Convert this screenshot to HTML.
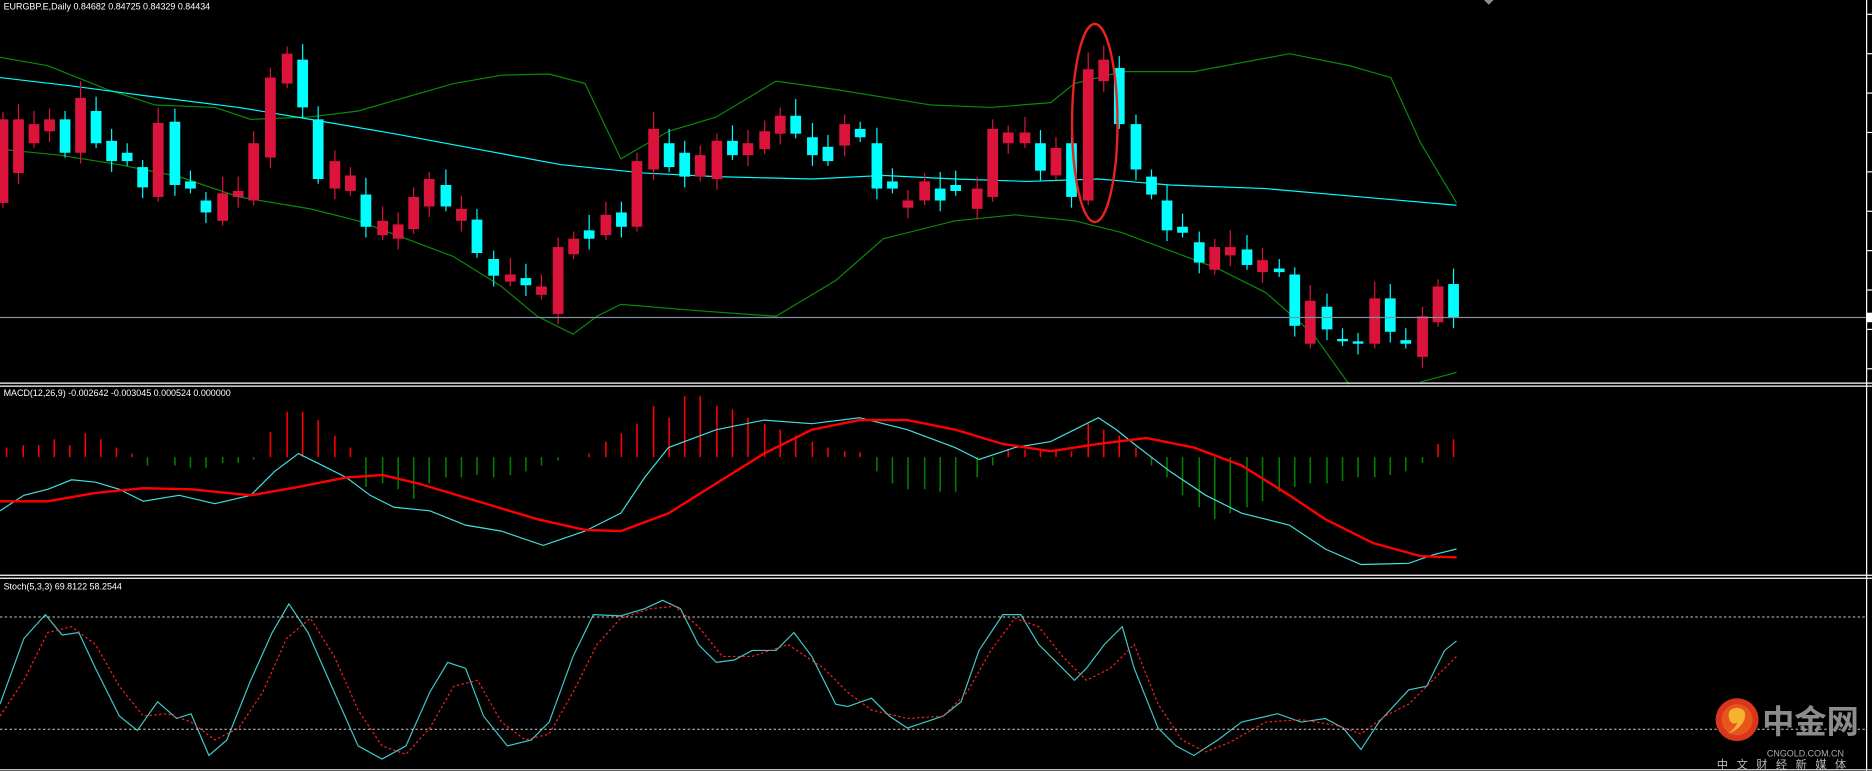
<!DOCTYPE html>
<html><head><meta charset="utf-8"><style>
html,body{margin:0;padding:0;background:#000;width:1872px;height:771px;overflow:hidden}
svg{display:block}
</style></head><body>
<svg id="s" width="1872" height="771" viewBox="0 0 1568 646" preserveAspectRatio="none" xmlns="http://www.w3.org/2000/svg">
<rect width="1568" height="646" fill="#000"/>
<g id="g"></g>
<text x="3" y="8" fill="#fff" font-family="Liberation Sans, sans-serif" font-size="7.5">EURGBP.E,Daily  0.84682 0.84725 0.84329 0.84434</text>
<text x="3" y="332" fill="#fff" font-family="Liberation Sans, sans-serif" font-size="7.5">MACD(12,26,9) -0.002642 -0.003045 0.000524 0.000000</text>
<text x="3" y="494" fill="#fff" font-family="Liberation Sans, sans-serif" font-size="7.5">Stoch(5,3,3) 69.8122 58.2544</text>
<line x1="0" y1="321" x2="1568" y2="321" stroke="#fff" stroke-width="1"/>
<line x1="0" y1="323.5" x2="1568" y2="323.5" stroke="#fff" stroke-width="1"/>
<line x1="0" y1="482" x2="1568" y2="482" stroke="#fff" stroke-width="1"/>
<line x1="0" y1="484.5" x2="1568" y2="484.5" stroke="#fff" stroke-width="1"/>
<line x1="0" y1="645" x2="1568" y2="645" stroke="#fff" stroke-width="1"/>
<line x1="1563.5" y1="0" x2="1563.5" y2="646" stroke="#fff" stroke-width="1"/>
<line x1="0" y1="266" x2="1563" y2="266" stroke="#8090a0" stroke-width="1"/>
<rect x="1563" y="262" width="5" height="8" fill="#fff"/>
<polygon points="1243,0 1251,0 1247,4" fill="#8090a0"/>
<line x1="0" y1="517" x2="1563" y2="517" stroke="#ccc" stroke-width="0.8" stroke-dasharray="2,2"/>
<line x1="0" y1="611" x2="1563" y2="611" stroke="#ccc" stroke-width="0.8" stroke-dasharray="2,2"/>
<ellipse cx="917" cy="103" rx="19" ry="83" fill="none" stroke="#e8231f" stroke-width="2"/>
<circle cx="1455" cy="603" r="18" fill="#d9361b"/>
<circle cx="1455" cy="603" r="13" fill="#e8561e"/>
<path d="M1449,604 q-4,-10 6,-11 q9,1 6,10 q-3,8 -14,12 q8,-6 8,-10 q-3,3 -6,-1z" fill="#f5b430"/>
<text x="1476" y="614" fill="#8c8c8c" font-family="Noto Sans CJK SC, sans-serif" font-weight="bold" font-size="27">中金网</text>
<text x="1480" y="634" fill="#aaa" font-family="Liberation Sans, sans-serif" font-size="7.5">CNGOLD.COM.CN</text>
<text x="1438" y="644" fill="#bbb" font-family="Noto Sans CJK SC, sans-serif" font-size="9.5" letter-spacing="7">中文财经新媒体</text>
</svg>
<script>
var NS="http://www.w3.org/2000/svg",g=document.getElementById("g");
function el(t,a){var e=document.createElementNS(NS,t);for(var k in a)e.setAttribute(k,a[k]);g.appendChild(e);return e;}
function pl(p,c,w,d){var s=[];for(var i=0;i<p.length;i+=2)s.push(p[i]+","+p[i+1]);var a={points:s.join(" "),fill:"none",stroke:c,"stroke-width":w};if(d)a["stroke-dasharray"]=d;el("polyline",a);}
pl([0,48,40,55,90,75,130,88,180,90,210,100,260,98,300,93,380,70,420,63,460,62,490,70,520,133,560,110,600,98,650,68,700,75,780,88,830,90,880,86,900,70,940,60,1000,60,1080,45,1130,55,1165,65,1190,120,1220,170],"#0a8a0a",1);
pl([0,65,60,72,120,80,200,90,260,100,330,112,400,125,470,138,540,145,600,148,680,150,740,147,800,150,860,152,920,150,980,155,1060,158,1140,165,1220,172],"#00ffff",1);
pl([0,125,50,130,100,138,150,148,200,165,260,175,300,185,340,200,380,215,420,240,450,265,480,280,500,265,520,255,580,260,650,265,700,235,740,200,800,185,850,180,900,185,940,195,980,210,1020,225,1060,245,1100,280,1130,322],"#0a8a0a",1);
pl([1190,320,1205,316,1220,312],"#0a8a0a",1);
var C=[[2,'r',100,170],[15,'r',100,145],[28,'r',104,120],[41,'r',100,110],[54,'c',100,128],[67,'r',82,128],[80,'c',93,120],[93,'c',118,135],[106,'c',128,135],[119,'c',140,157],[132,'r',103,165],[146,'c',102,155],[159,'c',152,158],[172,'c',168,178],[186,'r',162,185],[199,'r',160,165],[212,'r',120,168],[226,'r',65,132],[240,'r',45,70],[253,'c',50,90],[266,'c',100,150],[280,'r',135,158],[293,'r',147,160],[306,'c',163,190],[320,'r',185,197],[333,'r',188,200],[346,'r',165,192],[359,'r',150,173],[373,'c',155,173],[386,'r',175,185],[399,'c',184,212],[413,'c',217,231],[427,'r',230,236],[440,'c',233,239],[453,'r',240,247],[467,'r',207,263],[480,'r',200,213],[493,'c',193,200],[507,'r',180,197],[520,'c',178,190],[533,'r',135,190],[547,'r',108,142],[560,'c',120,140],[573,'c',128,148],[586,'r',130,148],[600,'r',118,150],[613,'c',118,130],[626,'r',120,130],[640,'r',110,125],[653,'r',97,112],[666,'c',97,112],[680,'c',115,130],[693,'c',123,135],[707,'r',104,122],[720,'c',108,115],[734,'c',120,158],[747,'c',152,158],[760,'r',168,174],[774,'r',152,168],[787,'c',158,168],[800,'c',155,160],[818,'r',158,175],[831,'r',108,165],[844,'r',111,120],[858,'r',111,120],[871,'c',120,143],[884,'r',124,147],[897,'c',120,165],[911,'r',58,168],[924,'r',50,68],[937,'c',57,104],[951,'c',104,142],[964,'c',148,163],[977,'c',168,193],[990,'c',190,195],[1004,'c',203,220],[1017,'r',207,226],[1030,'r',207,214],[1044,'c',209,222],[1057,'r',218,228],[1071,'c',225,228],[1084,'c',230,273],[1097,'r',252,288],[1111,'c',257,276],[1124,'c',284,286],[1137,'c',286,288],[1151,'r',250,288],[1164,'c',250,278],[1177,'c',285,288],[1191,'r',265,299],[1204,'r',240,270],[1217,'c',238,266]];
C.forEach(function(k,i){var col=k[1]=='r'?'#dc143c':'#00ffff';var wl=6+((i*7)%9),wh=4+((i*5)%10);
el("line",{x1:k[0]+.5,x2:k[0]+.5,y1:k[2]-wl,y2:k[3]+wh,stroke:col,"stroke-width":1});
el("rect",{x:k[0]-4,y:k[2],width:9,height:Math.max(2,k[3]-k[2]),fill:col});});
var base=383;
var H=[[5,375],[19,373],[32,373],[45,368],[58,373],[71,363],[84,368],[97,375],[110,380],[123,390],[146,390],[159,392],[172,392],[186,388],[199,388],[212,385],[226,362],[240,345],[253,345],[266,352],[280,365],[293,375],[306,408],[320,405],[333,410],[346,418],[359,405],[373,400],[386,400],[399,398],[413,400],[427,398],[440,395],[453,390],[467,386],[493,380],[507,370],[520,363],[533,355],[547,340],[560,350],[573,332],[586,332],[600,340],[613,343],[626,350],[640,355],[653,360],[666,365],[680,370],[693,375],[707,378],[720,379],[734,395],[747,405],[760,410],[774,410],[787,412],[800,412],[818,400],[831,390],[844,376],[858,377],[871,377],[884,377],[897,378],[911,355],[924,360],[937,365],[951,375],[964,390],[977,400],[990,415],[1004,425],[1017,435],[1030,430],[1044,425],[1057,420],[1071,412],[1084,408],[1097,405],[1111,405],[1124,403],[1137,400],[1151,400],[1164,398],[1177,395],[1191,388],[1204,372],[1217,368]];
H.forEach(function(h){var c=h[1]<base?'#ff0000':'#008000';el("line",{x1:h[0]+.5,x2:h[0]+.5,y1:base,y2:h[1],stroke:c,"stroke-width":1.3});});
pl([0,428,20,415,40,410,60,402,80,404,100,410,120,420,150,415,180,422,210,415,230,395,250,380,270,390,290,400,310,415,330,425,360,428,390,440,420,445,455,457,490,445,520,430,540,400,560,375,600,360,640,352,680,355,720,350,760,360,800,375,820,385,850,375,880,370,900,360,920,350,935,360,950,372,980,395,1010,415,1040,430,1080,440,1110,460,1140,473,1180,472,1200,465,1220,460],"#40e0e0",1);
pl([0,420,40,420,80,413,120,409,160,410,210,415,250,408,290,400,320,398,350,405,400,420,450,435,490,444,520,445,560,430,600,405,640,380,680,360,720,352,760,352,800,360,840,372,880,378,920,372,960,367,1000,375,1040,390,1080,415,1110,435,1150,455,1190,466,1220,467],"#ff0000",2);
pl([0,590,20,535,38,515,52,532,66,530,80,560,100,600,115,612,132,588,148,602,160,598,175,633,190,620,210,570,228,530,242,506,258,530,280,580,300,625,320,636,340,625,360,580,375,555,390,560,405,600,425,625,445,620,460,605,480,550,497,515,520,516,540,510,555,503,570,510,585,540,600,555,615,553,630,545,650,545,665,530,680,550,700,590,710,592,730,585,745,600,760,610,775,605,790,600,805,588,820,545,840,515,855,515,870,540,885,555,900,570,910,560,925,540,940,525,950,560,970,610,985,625,1000,633,1020,620,1040,605,1070,598,1090,605,1110,602,1125,610,1140,628,1155,605,1180,578,1195,575,1210,545,1220,537],"#40c8c8",1);
pl([0,600,20,570,40,530,60,525,80,540,100,575,120,600,140,598,160,605,180,620,200,610,220,580,240,535,260,518,280,550,300,595,320,625,340,632,360,610,380,575,400,570,420,605,440,620,460,615,480,580,500,540,520,518,545,510,565,508,585,525,605,550,630,550,660,540,690,560,710,580,730,595,760,602,790,600,810,580,830,545,850,518,870,525,890,550,910,570,930,560,950,540,970,590,990,620,1010,630,1030,622,1060,605,1090,603,1120,608,1140,615,1160,600,1180,590,1200,570,1220,550],"#ff2020",1,"2,2");
for(var y=12;y<320;y+=33)el("line",{x1:1564,x2:1568,y1:y,y2:y,stroke:"#fff","stroke-width":1});
</script>
</body></html>
